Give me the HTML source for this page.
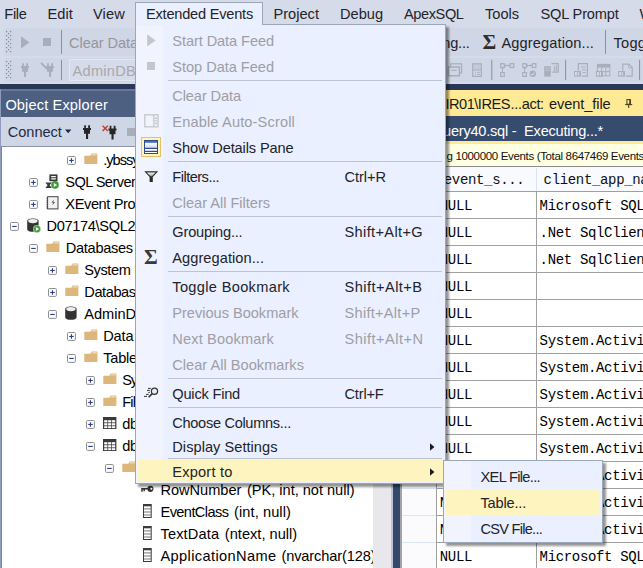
<!DOCTYPE html>
<html><head><meta charset="utf-8"><title>SSMS</title><style>html,body{margin:0;padding:0;background:#fff}
#r{position:relative;width:643px;height:568px;overflow:hidden;background:#d6dbe9;font-family:"Liberation Sans",sans-serif}
.t{position:absolute;white-space:pre;line-height:20px;display:block}
</style></head><body>
<div id="r">
<!-- base -->
<div style="position:absolute;left:0px;top:0px;width:643px;height:84px;background:#d6dbe9;"></div>
<div style="position:absolute;left:4px;top:28px;width:639px;height:28px;background:#cfd6e5;border-radius:2px 0 0 2px;"></div>
<div style="position:absolute;left:4px;top:57.5px;width:639px;height:24px;background:#cfd6e5;border-radius:2px 0 0 2px;"></div>
<svg style="position:absolute;left:6px;top:31px" width="6" height="22" fill="#7f8aa3"><rect x="0" y="0" width="1.2" height="1.2"/><rect x="4" y="0" width="1.2" height="1.2"/><rect x="2" y="2" width="1.2" height="1.2"/><rect x="0" y="4" width="1.2" height="1.2"/><rect x="4" y="4" width="1.2" height="1.2"/><rect x="2" y="6" width="1.2" height="1.2"/><rect x="0" y="8" width="1.2" height="1.2"/><rect x="4" y="8" width="1.2" height="1.2"/><rect x="2" y="10" width="1.2" height="1.2"/><rect x="0" y="12" width="1.2" height="1.2"/><rect x="4" y="12" width="1.2" height="1.2"/><rect x="2" y="14" width="1.2" height="1.2"/><rect x="0" y="16" width="1.2" height="1.2"/><rect x="4" y="16" width="1.2" height="1.2"/><rect x="2" y="18" width="1.2" height="1.2"/><rect x="0" y="20" width="1.2" height="1.2"/><rect x="4" y="20" width="1.2" height="1.2"/></svg>
<svg style="position:absolute;left:6px;top:61px" width="6" height="18" fill="#7f8aa3"><rect x="0" y="0" width="1.2" height="1.2"/><rect x="4" y="0" width="1.2" height="1.2"/><rect x="2" y="2" width="1.2" height="1.2"/><rect x="0" y="4" width="1.2" height="1.2"/><rect x="4" y="4" width="1.2" height="1.2"/><rect x="2" y="6" width="1.2" height="1.2"/><rect x="0" y="8" width="1.2" height="1.2"/><rect x="4" y="8" width="1.2" height="1.2"/><rect x="2" y="10" width="1.2" height="1.2"/><rect x="0" y="12" width="1.2" height="1.2"/><rect x="4" y="12" width="1.2" height="1.2"/><rect x="2" y="14" width="1.2" height="1.2"/><rect x="0" y="16" width="1.2" height="1.2"/><rect x="4" y="16" width="1.2" height="1.2"/></svg>
<svg style="position:absolute;left:21px;top:35.5px" width="9" height="13"><path d="M0 0.2L8.4 6.4 0 12.6z" fill="#a9aebb"/></svg>
<div style="position:absolute;left:43px;top:37.7px;width:8.2px;height:8.3px;background:#a9aebb;"></div>
<div style="position:absolute;left:61px;top:30px;width:1px;height:24px;background:#8591a8;"></div>
<svg style="position:absolute;left:21px;top:63px" width="8" height="14"><path d="M1.2 0.2h1.7v2.8H1.2z M5.2 0.2h1.8v2.8H5.2z M0 3h8v2H0z M1 5h6v3.7H1z M3 8.7h2.1v5.3H3z" fill="#a9aebb"/></svg>
<svg style="position:absolute;left:40px;top:62px" width="15" height="16" fill="#a9aebb"><g transform="translate(6,1)"><path d="M1.2 0.2h1.7v2.8H1.2z M5.2 0.2h1.8v2.8H5.2z M0 3h8v2H0z M1 5h6v3.7H1z M3 8.7h2.1v5.3H3z"/></g><path d="M0.4 1.4l1.4-1.2 6 6.2-1.6 1.2z"/></svg>
<div style="position:absolute;left:61px;top:60px;width:1px;height:20px;background:#8591a8;"></div>
<div style="position:absolute;left:69px;top:59.3px;width:72px;height:21.5px;background:#d5dbe9;border:1px solid #e1e6f0;box-sizing:border-box;"></div>
<span style="position:absolute;left:482.6px;top:30px;font:bold 21px 'Liberation Serif',serif;line-height:24px;color:#2d2d2d">&Sigma;</span>
<div style="position:absolute;left:605px;top:30px;width:1px;height:24px;background:#8591a8;"></div>
<svg style="position:absolute;left:443px;top:58px" width="200" height="26" fill="none" stroke="#a9aebb" stroke-width="1.2">
<rect x="7.6" y="5.8" width="11" height="9.2"/><rect x="5.4" y="9" width="11" height="8.8" fill="#cfd6e5" stroke-width="1.5"/><line x1="8.4" y1="12.4" x2="13.6" y2="12.4"/>
<rect x="29.7" y="5.8" width="8.6" height="12.6"/><rect x="30.2" y="6.2" width="7.6" height="5.6" fill="#a9aebb" fill-opacity=".3" stroke="none"/><line x1="30" y1="12" x2="38" y2="12" stroke-width="1"/><path d="M32 14.3h1M34 14.3h3M32 16.4h1M34 16.4h3" stroke-width="1"/>
<line x1="48.8" y1="1.8" x2="48.8" y2="22" stroke="#8591a8" stroke-width="1"/>
<rect x="57.7" y="5.7" width="3.6" height="3.8"/><rect x="67.2" y="5.7" width="3.6" height="3.8"/><rect x="57.7" y="14.6" width="3.6" height="3.8"/><line x1="61.6" y1="7.5" x2="67" y2="7.5" stroke-width="1"/><path d="M63 6.4l-1.2 1.1 1.2 1.1M65.4 6.4l1.2 1.1-1.2 1.1" stroke-width=".8"/><line x1="59.5" y1="9.8" x2="59.5" y2="14.4" stroke-width="1"/><path d="M58.5 11l1-1.1 1 1.1" stroke-width=".8"/>
<rect x="79.8" y="5.7" width="3.6" height="3.8"/><rect x="89.3" y="5.7" width="3.6" height="3.8"/><rect x="79.8" y="14.6" width="3.6" height="3.8"/><line x1="83.7" y1="7.5" x2="89" y2="7.5" stroke-width="1"/><path d="M85 6.4l-1.2 1.1 1.2 1.1M87.4 6.4l1.2 1.1-1.2 1.1" stroke-width=".8"/><line x1="81.6" y1="9.8" x2="81.6" y2="14.4" stroke-width="1"/><path d="M80.6 11l1-1.1 1 1.1" stroke-width=".8"/><circle cx="89.8" cy="15.8" r="3.2" fill="#a9aebb" stroke="none"/><path d="M88.2 15.8l1.2 1.3 2-2.5" stroke="#e6eaf3" stroke-width=".9"/>
<rect x="101.2" y="8.3" width="6.6" height="10.3" fill="#a9aebb" stroke="none"/><path d="M102 10.3h5M102 12.3h5" stroke="#c6ccda" stroke-width=".8"/><path d="M108.4 5.6h6.8v8.6h-6"/><path d="M111.4 8.4v5M113.3 7v6.4" stroke-width="1"/>
<line x1="122.6" y1="1.8" x2="122.6" y2="22" stroke="#8591a8" stroke-width="1"/>
<path d="M135.4 12.6V5.7h9v12.4h-5.6"/><path d="M138 9h4.6M138.6 11.8h4M139.6 14.6h3" stroke-width="1"/><rect x="131" y="13" width="7" height="5.6" fill="#a9aebb" stroke="none"/><path d="M132.4 14.5h1.4v2.6h-1.4z M135.6 14.2v3.2" stroke="#e6eaf3" stroke-width="0.8" fill="none"/>
<rect x="154.4" y="6.4" width="12.4" height="11.4" stroke-width="1"/><rect x="154" y="6" width="13.2" height="3.6" fill="#a9aebb" stroke="none"/><path d="M158.6 9.6v8M162.8 9.6v8M154.4 13.6h12.4" stroke-width="1"/><rect x="152.9" y="13" width="7" height="5.6" fill="#a9aebb" stroke="none"/><path d="M154.3 14.5h1.4v2.6h-1.4z M157.5 14.2v3.2" stroke="#e6eaf3" stroke-width="0.8" fill="none"/>
<path d="M179.8 12.6V6.2h6.2l3.2 3.2v8.8h-6.4"/><path d="M185.6 6.4v3.4h3.4" stroke-width=".9"/><rect x="175" y="13" width="7" height="5.6" fill="#a9aebb" stroke="none"/><path d="M176.4 14.5h1.4v2.6h-1.4z M179.6 14.2v3.2" stroke="#e6eaf3" stroke-width="0.8" fill="none"/>
<line x1="196.6" y1="1.8" x2="196.6" y2="22" stroke="#8591a8" stroke-width="1"/>
</svg>
<div style="position:absolute;left:0px;top:84px;width:643px;height:6px;background:#293955;"></div>
<div style="position:absolute;left:0px;top:89.4px;width:400px;height:479px;background:#34486b;"></div>
<div style="position:absolute;left:0px;top:89.4px;width:392px;height:479px;background:#8e9bbc;"></div>
<div style="position:absolute;left:1.4px;top:89.4px;width:390.6px;height:1.6px;background:#6577a0;"></div>
<div style="position:absolute;left:1.4px;top:91px;width:390.6px;height:26px;background:#4d6082;"></div>
<div style="position:absolute;left:1.4px;top:117px;width:390.6px;height:29px;background:#cfd6e5;"></div>
<div style="position:absolute;left:1px;top:146px;width:391px;height:1px;background:#8e95a8;"></div>
<div style="position:absolute;left:1.3px;top:146px;width:0.8px;height:422px;background:#7c869e;"></div>
<div style="position:absolute;left:2px;top:147px;width:371px;height:421px;background:#ffffff;"></div>
<div style="position:absolute;left:373px;top:147px;width:18px;height:421px;background:#e8e8ec;"></div>
<div style="position:absolute;left:391px;top:90px;width:2px;height:478px;background:#bcc5d8;"></div>
<svg style="position:absolute;left:65px;top:129px" width="7" height="5"><path d="M0 0.5h6.4L3.2 4.2z" fill="#1e2a4a"/></svg>
<svg style="position:absolute;left:83px;top:125px" width="8" height="14"><path d="M1.2 0.2h1.7v2.8H1.2z M5.2 0.2h1.8v2.8H5.2z M0 3h8v2H0z M1 5h6v3.7H1z M3 8.7h2.1v5.3H3z" fill="#262626"/></svg>
<svg style="position:absolute;left:101.5px;top:124.5px" width="16" height="15"><g transform="translate(6.5,0.5)"><path d="M1.2 0.2h1.7v2.8H1.2z M5.2 0.2h1.8v2.8H5.2z M0 3h8v2H0z M1 5h6v3.7H1z M3 8.7h2.1v5.3H3z" fill="#262626"/></g><path d="M0.6 0.8l5.2 5.2M5.8 0.8L0.6 6" stroke="#c8391f" stroke-width="1.3"/></svg>
<div style="position:absolute;left:127px;top:128px;width:9px;height:8px;background:#a9aebb;"></div>
<div style="position:absolute;left:400px;top:89.7px;width:243px;height:26.3px;background:#feea95;"></div>
<div style="position:absolute;left:400px;top:116px;width:243px;height:25px;background:#364c6e;"></div>
<div style="position:absolute;left:400px;top:141px;width:243px;height:2.5px;background:#feea95;"></div>
<div style="position:absolute;left:400px;top:143.5px;width:243px;height:23px;background:#ffffe1;"></div>
<div style="position:absolute;left:400px;top:167px;width:243px;height:401px;background:#ffffff;"></div>
<div style="position:absolute;left:400px;top:167px;width:243px;height:24px;background:#f9fafd;"></div>
<div style="position:absolute;left:400px;top:166px;width:243px;height:1px;background:#8c8c8c;"></div>
<div style="position:absolute;left:401.5px;top:167px;width:34.5px;height:401px;background:#fbfbfd;"></div>
<div style="position:absolute;left:399.5px;top:143px;width:2px;height:425px;background:#a3a3a3;"></div>
<svg style="position:absolute;left:624px;top:98px" width="10" height="11" fill="none" stroke="#4a3f1e"><rect x="2.9" y="1.6" width="3.4" height="4.6" stroke-width="1"/><path d="M6.1 1.6v4.6" stroke-width="1.6"/><path d="M1.2 6.6h7" stroke-width="1.1"/><path d="M4.7 6.8v3.2" stroke-width="1.1"/></svg>
<div style="position:absolute;left:437px;top:191px;width:206px;height:1px;background:#a0a0a0;"></div>
<div style="position:absolute;left:402px;top:191px;width:34px;height:1px;background:#d9e6f5;"></div>
<div style="position:absolute;left:437px;top:218px;width:206px;height:1px;background:#a0a0a0;"></div>
<div style="position:absolute;left:402px;top:218px;width:34px;height:1px;background:#d9e6f5;"></div>
<div style="position:absolute;left:437px;top:245px;width:206px;height:1px;background:#a0a0a0;"></div>
<div style="position:absolute;left:402px;top:245px;width:34px;height:1px;background:#d9e6f5;"></div>
<div style="position:absolute;left:437px;top:272px;width:206px;height:1px;background:#a0a0a0;"></div>
<div style="position:absolute;left:402px;top:272px;width:34px;height:1px;background:#d9e6f5;"></div>
<div style="position:absolute;left:437px;top:299px;width:206px;height:1px;background:#a0a0a0;"></div>
<div style="position:absolute;left:402px;top:299px;width:34px;height:1px;background:#d9e6f5;"></div>
<div style="position:absolute;left:437px;top:326px;width:206px;height:1px;background:#a0a0a0;"></div>
<div style="position:absolute;left:402px;top:326px;width:34px;height:1px;background:#d9e6f5;"></div>
<div style="position:absolute;left:437px;top:353px;width:206px;height:1px;background:#a0a0a0;"></div>
<div style="position:absolute;left:402px;top:353px;width:34px;height:1px;background:#d9e6f5;"></div>
<div style="position:absolute;left:437px;top:380px;width:206px;height:1px;background:#a0a0a0;"></div>
<div style="position:absolute;left:402px;top:380px;width:34px;height:1px;background:#d9e6f5;"></div>
<div style="position:absolute;left:437px;top:407px;width:206px;height:1px;background:#a0a0a0;"></div>
<div style="position:absolute;left:402px;top:407px;width:34px;height:1px;background:#d9e6f5;"></div>
<div style="position:absolute;left:437px;top:434px;width:206px;height:1px;background:#a0a0a0;"></div>
<div style="position:absolute;left:402px;top:434px;width:34px;height:1px;background:#d9e6f5;"></div>
<div style="position:absolute;left:437px;top:461px;width:206px;height:1px;background:#a0a0a0;"></div>
<div style="position:absolute;left:402px;top:461px;width:34px;height:1px;background:#d9e6f5;"></div>
<div style="position:absolute;left:437px;top:488px;width:206px;height:1px;background:#a0a0a0;"></div>
<div style="position:absolute;left:402px;top:488px;width:34px;height:1px;background:#d9e6f5;"></div>
<div style="position:absolute;left:437px;top:515px;width:206px;height:1px;background:#a0a0a0;"></div>
<div style="position:absolute;left:402px;top:515px;width:34px;height:1px;background:#d9e6f5;"></div>
<div style="position:absolute;left:437px;top:542px;width:206px;height:1px;background:#a0a0a0;"></div>
<div style="position:absolute;left:402px;top:542px;width:34px;height:1px;background:#d9e6f5;"></div>
<div style="position:absolute;left:436px;top:191px;width:1px;height:377px;background:#a0a0a0;"></div>
<div style="position:absolute;left:536px;top:191px;width:1px;height:377px;background:#a0a0a0;"></div>
<div style="position:absolute;left:536px;top:168px;width:1px;height:23px;background:#dde3ee;"></div>
<div style="position:absolute;left:436px;top:168px;width:1px;height:23px;background:#dde3ee;"></div>
<svg style="position:absolute;left:67.2px;top:156.1px" width="10" height="10"><rect x="0.5" y="0.5" width="7.9" height="7.9" rx="1" fill="#fcfcfc" stroke="#8f8f8f"/><path d="M2.2 4.45h4.5" stroke="#2b3f8f" stroke-width="1.1"/><path d="M4.45 2.2v4.5" stroke="#2b3f8f" stroke-width="1.1"/></svg>
<svg style="position:absolute;left:83.5px;top:152.7px" width="14" height="12"><path d="M0.3 2.8L6.3 2.8 7.6 0.6 13 0.6 13.4 1 13.4 10.6 13 11 0.3 11Z" fill="#dcb67a"/><path d="M7.2 2.4l0.9-1.3h4.6v1.3z" fill="#efd7a8"/></svg>
<svg style="position:absolute;left:29.2px;top:178.1px" width="10" height="10"><rect x="0.5" y="0.5" width="7.9" height="7.9" rx="1" fill="#fcfcfc" stroke="#8f8f8f"/><path d="M2.2 4.45h4.5" stroke="#2b3f8f" stroke-width="1.1"/><path d="M4.45 2.2v4.5" stroke="#2b3f8f" stroke-width="1.1"/></svg>
<svg style="position:absolute;left:44.5px;top:173.6px" width="16" height="17"><rect x="4.4" y="0.4" width="8.1" height="6.8" fill="#3a3a3a"/><path d="M6.2 2.6h4.6M6.2 4.9h4.6" stroke="#fff" stroke-width="1.3"/><path d="M0.3 8.4h6.6l-2.3 2.85 2.3 2.85H0.3l2.3-2.85z" fill="#3a3a3a"/><circle cx="10" cy="10.9" r="3.8" fill="#3f9c35"/><path d="M8.8 8.9l3.3 2-3.3 2z" fill="#fff"/></svg>
<svg style="position:absolute;left:29.2px;top:200.1px" width="10" height="10"><rect x="0.5" y="0.5" width="7.9" height="7.9" rx="1" fill="#fcfcfc" stroke="#8f8f8f"/><path d="M2.2 4.45h4.5" stroke="#2b3f8f" stroke-width="1.1"/><path d="M4.45 2.2v4.5" stroke="#2b3f8f" stroke-width="1.1"/></svg>
<svg style="position:absolute;left:45.5px;top:196px" width="14" height="15"><rect x="1.6" y="0.7" width="10.4" height="12.2" fill="#f2f2f2" stroke="#444" stroke-width="1"/><path d="M0.4 2.2h1.6M0.4 4.2h1.6M0.4 6.2h1.6M0.4 8.2h1.6M0.4 10.2h1.6M0.4 12h1.6" stroke="#444" stroke-width="0.9"/><path d="M8.2 3.4L5.4 6.5h1.9L6.2 9.4 9 6h-1.9z" fill="#444"/></svg>
<svg style="position:absolute;left:10.2px;top:222.1px" width="10" height="10"><rect x="0.5" y="0.5" width="7.9" height="7.9" rx="1" fill="#fcfcfc" stroke="#8f8f8f"/><path d="M2.2 4.45h4.5" stroke="#2b3f8f" stroke-width="1.1"/></svg>
<svg style="position:absolute;left:26.9px;top:218.3px" width="13" height="15"><path d="M0.2 3C0.2 -0.4 11.6 -0.4 11.6 3V11.2C11.6 14.6 0.2 14.6 0.2 11.2Z" fill="#333"/><ellipse cx="5.9" cy="3.1" rx="4.7" ry="2.1" fill="#eee"/></svg>
<svg style="position:absolute;left:32.6px;top:224.6px" width="9" height="9"><circle cx="4" cy="4" r="3.8" fill="#3f9c35" stroke="#fff" stroke-width="0.5"/><path d="M2.9 2.1l3.2 1.9-3.2 1.9z" fill="#fff"/></svg>
<svg style="position:absolute;left:29.2px;top:244.1px" width="10" height="10"><rect x="0.5" y="0.5" width="7.9" height="7.9" rx="1" fill="#fcfcfc" stroke="#8f8f8f"/><path d="M2.2 4.45h4.5" stroke="#2b3f8f" stroke-width="1.1"/></svg>
<svg style="position:absolute;left:45.5px;top:240.7px" width="14" height="12"><path d="M0.3 2.8L6.3 2.8 7.6 0.6 13 0.6 13.4 1 13.4 10.6 13 11 0.3 11Z" fill="#dcb67a"/><path d="M7.2 2.4l0.9-1.3h4.6v1.3z" fill="#efd7a8"/></svg>
<svg style="position:absolute;left:48.2px;top:266.1px" width="10" height="10"><rect x="0.5" y="0.5" width="7.9" height="7.9" rx="1" fill="#fcfcfc" stroke="#8f8f8f"/><path d="M2.2 4.45h4.5" stroke="#2b3f8f" stroke-width="1.1"/><path d="M4.45 2.2v4.5" stroke="#2b3f8f" stroke-width="1.1"/></svg>
<svg style="position:absolute;left:64.5px;top:262.7px" width="14" height="12"><path d="M0.3 2.8L6.3 2.8 7.6 0.6 13 0.6 13.4 1 13.4 10.6 13 11 0.3 11Z" fill="#dcb67a"/><path d="M7.2 2.4l0.9-1.3h4.6v1.3z" fill="#efd7a8"/></svg>
<svg style="position:absolute;left:48.2px;top:288.1px" width="10" height="10"><rect x="0.5" y="0.5" width="7.9" height="7.9" rx="1" fill="#fcfcfc" stroke="#8f8f8f"/><path d="M2.2 4.45h4.5" stroke="#2b3f8f" stroke-width="1.1"/><path d="M4.45 2.2v4.5" stroke="#2b3f8f" stroke-width="1.1"/></svg>
<svg style="position:absolute;left:64.5px;top:284.7px" width="14" height="12"><path d="M0.3 2.8L6.3 2.8 7.6 0.6 13 0.6 13.4 1 13.4 10.6 13 11 0.3 11Z" fill="#dcb67a"/><path d="M7.2 2.4l0.9-1.3h4.6v1.3z" fill="#efd7a8"/></svg>
<svg style="position:absolute;left:48.2px;top:310.1px" width="10" height="10"><rect x="0.5" y="0.5" width="7.9" height="7.9" rx="1" fill="#fcfcfc" stroke="#8f8f8f"/><path d="M2.2 4.45h4.5" stroke="#2b3f8f" stroke-width="1.1"/></svg>
<svg style="position:absolute;left:65px;top:306px" width="13" height="15"><path d="M0.2 3C0.2 -0.4 11.6 -0.4 11.6 3V11.2C11.6 14.6 0.2 14.6 0.2 11.2Z" fill="#333"/><ellipse cx="5.9" cy="3.1" rx="4.7" ry="2.1" fill="#eee"/></svg>
<svg style="position:absolute;left:67.2px;top:332.1px" width="10" height="10"><rect x="0.5" y="0.5" width="7.9" height="7.9" rx="1" fill="#fcfcfc" stroke="#8f8f8f"/><path d="M2.2 4.45h4.5" stroke="#2b3f8f" stroke-width="1.1"/><path d="M4.45 2.2v4.5" stroke="#2b3f8f" stroke-width="1.1"/></svg>
<svg style="position:absolute;left:83.5px;top:328.7px" width="14" height="12"><path d="M0.3 2.8L6.3 2.8 7.6 0.6 13 0.6 13.4 1 13.4 10.6 13 11 0.3 11Z" fill="#dcb67a"/><path d="M7.2 2.4l0.9-1.3h4.6v1.3z" fill="#efd7a8"/></svg>
<svg style="position:absolute;left:67.2px;top:354.1px" width="10" height="10"><rect x="0.5" y="0.5" width="7.9" height="7.9" rx="1" fill="#fcfcfc" stroke="#8f8f8f"/><path d="M2.2 4.45h4.5" stroke="#2b3f8f" stroke-width="1.1"/></svg>
<svg style="position:absolute;left:83.5px;top:350.7px" width="14" height="12"><path d="M0.3 2.8L6.3 2.8 7.6 0.6 13 0.6 13.4 1 13.4 10.6 13 11 0.3 11Z" fill="#dcb67a"/><path d="M7.2 2.4l0.9-1.3h4.6v1.3z" fill="#efd7a8"/></svg>
<svg style="position:absolute;left:86.2px;top:376.1px" width="10" height="10"><rect x="0.5" y="0.5" width="7.9" height="7.9" rx="1" fill="#fcfcfc" stroke="#8f8f8f"/><path d="M2.2 4.45h4.5" stroke="#2b3f8f" stroke-width="1.1"/><path d="M4.45 2.2v4.5" stroke="#2b3f8f" stroke-width="1.1"/></svg>
<svg style="position:absolute;left:102.5px;top:372.7px" width="14" height="12"><path d="M0.3 2.8L6.3 2.8 7.6 0.6 13 0.6 13.4 1 13.4 10.6 13 11 0.3 11Z" fill="#dcb67a"/><path d="M7.2 2.4l0.9-1.3h4.6v1.3z" fill="#efd7a8"/></svg>
<svg style="position:absolute;left:86.2px;top:398.1px" width="10" height="10"><rect x="0.5" y="0.5" width="7.9" height="7.9" rx="1" fill="#fcfcfc" stroke="#8f8f8f"/><path d="M2.2 4.45h4.5" stroke="#2b3f8f" stroke-width="1.1"/><path d="M4.45 2.2v4.5" stroke="#2b3f8f" stroke-width="1.1"/></svg>
<svg style="position:absolute;left:102.5px;top:394.7px" width="14" height="12"><path d="M0.3 2.8L6.3 2.8 7.6 0.6 13 0.6 13.4 1 13.4 10.6 13 11 0.3 11Z" fill="#dcb67a"/><path d="M7.2 2.4l0.9-1.3h4.6v1.3z" fill="#efd7a8"/></svg>
<svg style="position:absolute;left:86.2px;top:420.1px" width="10" height="10"><rect x="0.5" y="0.5" width="7.9" height="7.9" rx="1" fill="#fcfcfc" stroke="#8f8f8f"/><path d="M2.2 4.45h4.5" stroke="#2b3f8f" stroke-width="1.1"/><path d="M4.45 2.2v4.5" stroke="#2b3f8f" stroke-width="1.1"/></svg>
<svg style="position:absolute;left:102.9px;top:417.1px" width="14" height="13"><rect x="0" y="0" width="13.4" height="12" fill="#3a3a3a"/><g fill="#fff"><rect x="1.2" y="3.2" width="3.2" height="2.2"/><rect x="1.2" y="6.2" width="3.2" height="2.2"/><rect x="1.2" y="9.2" width="3.2" height="1.9"/><rect x="5.1" y="3.2" width="3.2" height="2.2"/><rect x="5.1" y="6.2" width="3.2" height="2.2"/><rect x="5.1" y="9.2" width="3.2" height="1.9"/><rect x="9" y="3.2" width="3.2" height="2.2"/><rect x="9" y="6.2" width="3.2" height="2.2"/><rect x="9" y="9.2" width="3.2" height="1.9"/></g></svg>
<svg style="position:absolute;left:86.2px;top:442.1px" width="10" height="10"><rect x="0.5" y="0.5" width="7.9" height="7.9" rx="1" fill="#fcfcfc" stroke="#8f8f8f"/><path d="M2.2 4.45h4.5" stroke="#2b3f8f" stroke-width="1.1"/></svg>
<svg style="position:absolute;left:102.9px;top:439.1px" width="14" height="13"><rect x="0" y="0" width="13.4" height="12" fill="#3a3a3a"/><g fill="#fff"><rect x="1.2" y="3.2" width="3.2" height="2.2"/><rect x="1.2" y="6.2" width="3.2" height="2.2"/><rect x="1.2" y="9.2" width="3.2" height="1.9"/><rect x="5.1" y="3.2" width="3.2" height="2.2"/><rect x="5.1" y="6.2" width="3.2" height="2.2"/><rect x="5.1" y="9.2" width="3.2" height="1.9"/><rect x="9" y="3.2" width="3.2" height="2.2"/><rect x="9" y="6.2" width="3.2" height="2.2"/><rect x="9" y="9.2" width="3.2" height="1.9"/></g></svg>
<svg style="position:absolute;left:105.2px;top:464.1px" width="10" height="10"><rect x="0.5" y="0.5" width="7.9" height="7.9" rx="1" fill="#fcfcfc" stroke="#8f8f8f"/><path d="M2.2 4.45h4.5" stroke="#2b3f8f" stroke-width="1.1"/></svg>
<svg style="position:absolute;left:121.5px;top:460.7px" width="14" height="12"><path d="M0.3 2.8L6.3 2.8 7.6 0.6 13 0.6 13.4 1 13.4 10.6 13 11 0.3 11Z" fill="#dcb67a"/><path d="M7.2 2.4l0.9-1.3h4.6v1.3z" fill="#efd7a8"/></svg>
<svg style="position:absolute;left:141px;top:485px" width="13" height="9"><circle cx="9.4" cy="3.8" r="3.1" fill="#333"/><circle cx="10.4" cy="3.8" r="1" fill="#fff"/><path d="M0.2 3.8h7M1 3.8v3M3.2 3.8v2.4" stroke="#333" stroke-width="1.5" fill="none"/></svg>
<svg style="position:absolute;left:142.6px;top:504px" width="10" height="15"><rect x="0.5" y="0.5" width="7.7" height="13" fill="#fff" stroke="#3c3c3c" stroke-width="1"/><rect x="0.5" y="0.5" width="7.7" height="1.8" fill="#3c3c3c"/><path d="M1 4.9h7M1 8h7M1 11h7" stroke="#555" stroke-width="0.8"/></svg>
<svg style="position:absolute;left:142.6px;top:526px" width="10" height="15"><rect x="0.5" y="0.5" width="7.7" height="13" fill="#fff" stroke="#3c3c3c" stroke-width="1"/><rect x="0.5" y="0.5" width="7.7" height="1.8" fill="#3c3c3c"/><path d="M1 4.9h7M1 8h7M1 11h7" stroke="#555" stroke-width="0.8"/></svg>
<svg style="position:absolute;left:142.6px;top:548px" width="10" height="15"><rect x="0.5" y="0.5" width="7.7" height="13" fill="#fff" stroke="#3c3c3c" stroke-width="1"/><rect x="0.5" y="0.5" width="7.7" height="1.8" fill="#3c3c3c"/><path d="M1 4.9h7M1 8h7M1 11h7" stroke="#555" stroke-width="0.8"/></svg>
<span class="t" style='left:4.30px;top:3.54px;font-size:14.6px;color:#232329;letter-spacing:-0.304px;'>File</span>
<span class="t" style='left:47.60px;top:3.54px;font-size:14.6px;color:#232329;letter-spacing:-0.014px;'>Edit</span>
<span class="t" style='left:93.00px;top:3.54px;font-size:14.6px;color:#232329;letter-spacing:0.131px;'>View</span>
<span class="t" style='left:273.50px;top:3.54px;font-size:14.6px;color:#232329;letter-spacing:0.011px;'>Project</span>
<span class="t" style='left:340.00px;top:3.54px;font-size:14.6px;color:#232329;letter-spacing:-0.003px;'>Debug</span>
<span class="t" style='left:404.00px;top:3.54px;font-size:14.6px;color:#232329;letter-spacing:-0.424px;'>ApexSQL</span>
<span class="t" style='left:485.00px;top:3.54px;font-size:14.6px;color:#232329;letter-spacing:-0.016px;'>Tools</span>
<span class="t" style='left:540.50px;top:3.54px;font-size:14.6px;color:#232329;letter-spacing:-0.157px;'>SQL Prompt</span>
<span class="t" style='left:639.50px;top:3.54px;font-size:14.6px;color:#232329;letter-spacing:-0.234px;'>Window</span>
<span class="t" style='left:69.00px;top:32.64px;font-size:14.6px;color:#96959b;letter-spacing:-0.077px;'>Clear Data</span>
<span class="t" style='left:400.00px;top:32.74px;font-size:14.6px;color:#232329;letter-spacing:-0.246px;'>Grouping...</span>
<span class="t" style='left:501.50px;top:32.74px;font-size:14.6px;color:#232329;letter-spacing:0.116px;'>Aggregation...</span>
<span class="t" style='left:613.50px;top:32.74px;font-size:14.6px;color:#232329;letter-spacing:0.249px;'>Toggle Bookmark</span>
<span class="t" style='left:72.50px;top:61.24px;font-size:14.6px;color:#a9a8ad;letter-spacing:0.266px;'>AdminDB</span>
<span class="t" style='left:5.40px;top:94.84px;font-size:14.6px;color:#ffffff;letter-spacing:0.128px;'>Object Explorer</span>
<span class="t" style='left:7.80px;top:122.04px;font-size:14.6px;color:#1e2a4a;letter-spacing:-0.051px;'>Connect</span>
<span class="t" style='left:103.30px;top:150.24px;font-size:14.6px;color:#000;letter-spacing:-1.033px;width:31.299999999999997px;overflow:hidden;'>.ybssy</span>
<span class="t" style='left:65.30px;top:172.24px;font-size:14.6px;color:#000;letter-spacing:-0.580px;width:69.3px;overflow:hidden;'>SQL Server Agent</span>
<span class="t" style='left:65.30px;top:194.24px;font-size:14.6px;color:#000;letter-spacing:-0.393px;width:69.3px;overflow:hidden;'>XEvent Profiler</span>
<span class="t" style='left:46.50px;top:216.24px;font-size:14.6px;color:#000;letter-spacing:-0.345px;width:88.1px;overflow:hidden;'>D07174\SQL2016 (SQL</span>
<span class="t" style='left:65.80px;top:238.24px;font-size:14.6px;color:#000;letter-spacing:-0.309px;width:68.8px;overflow:hidden;'>Databases</span>
<span class="t" style='left:84.30px;top:260.24px;font-size:14.6px;color:#000;letter-spacing:-0.426px;width:50.3px;overflow:hidden;'>System Databases</span>
<span class="t" style='left:84.30px;top:282.24px;font-size:14.6px;color:#000;letter-spacing:-0.437px;width:50.3px;overflow:hidden;'>Database Snapshots</span>
<span class="t" style='left:84.30px;top:304.24px;font-size:14.6px;color:#000;letter-spacing:-0.034px;width:50.3px;overflow:hidden;'>AdminDB</span>
<span class="t" style='left:103.20px;top:326.24px;font-size:14.6px;color:#000;letter-spacing:-0.157px;width:31.39999999999999px;overflow:hidden;'>Data</span>
<span class="t" style='left:103.20px;top:348.24px;font-size:14.6px;color:#000;letter-spacing:-0.218px;width:31.39999999999999px;overflow:hidden;'>Tables</span>
<span class="t" style='left:122.30px;top:370.24px;font-size:14.6px;color:#000;letter-spacing:-1.166px;width:12.299999999999997px;overflow:hidden;'>System Tables</span>
<span class="t" style='left:122.30px;top:392.24px;font-size:14.6px;color:#000;letter-spacing:-0.902px;width:12.299999999999997px;overflow:hidden;'>FileTables</span>
<span class="t" style='left:122.30px;top:414.24px;font-size:14.6px;color:#000;letter-spacing:-0.517px;width:12.299999999999997px;overflow:hidden;'>dbo.Trace</span>
<span class="t" style='left:122.30px;top:436.24px;font-size:14.6px;color:#000;letter-spacing:-0.517px;width:12.299999999999997px;overflow:hidden;'>dbo.TraceTable</span>
<span class="t" style='left:160.50px;top:480.24px;font-size:14.6px;color:#000;letter-spacing:-0.034px;'>RowNumber</span>
<span class="t" style='left:247.00px;top:480.24px;font-size:14.6px;color:#000;letter-spacing:-0.021px;'>(PK, int, not null)</span>
<span class="t" style='left:160.50px;top:502.24px;font-size:14.6px;color:#000;letter-spacing:-0.591px;'>EventClass</span>
<span class="t" style='left:234.00px;top:502.24px;font-size:14.6px;color:#000;letter-spacing:0.094px;'>(int, null)</span>
<span class="t" style='left:160.50px;top:524.24px;font-size:14.6px;color:#000;letter-spacing:0.138px;'>TextData</span>
<span class="t" style='left:224.80px;top:524.24px;font-size:14.6px;color:#000;letter-spacing:0.016px;'>(ntext, null)</span>
<span class="t" style='left:160.50px;top:546.24px;font-size:14.6px;color:#000;letter-spacing:0.378px;'>ApplicationName</span>
<span class="t" style='left:281.40px;top:546.24px;font-size:14.6px;color:#000;letter-spacing:-0.108px;width:91.6px;overflow:hidden;'>(nvarchar(128), null)</span>
<span class="t" style='left:445.50px;top:93.84px;font-size:14.6px;color:#1b1b1c;letter-spacing:-0.506px;'>IR01\IRES</span>
<span class="t" style='left:510.60px;top:93.84px;font-size:14.6px;color:#1b1b1c;letter-spacing:-0.355px;'>...act:</span>
<span class="t" style='left:549.00px;top:93.84px;font-size:14.6px;color:#1b1b1c;letter-spacing:-0.088px;'>event_file</span>
<span class="t" style='left:443.00px;top:121.44px;font-size:14.6px;color:#ffffff;letter-spacing:-0.233px;'>uery40.sql -  Executing...*</span>
<span class="t" style='left:446.50px;top:145.52px;font-size:11.5px;color:#111;letter-spacing:-0.338px;'>g 1000000 Events (Total 8647469 Events</span>
<span class="t" style='left:443.80px;top:170.47px;font-size:14px;color:#111;letter-spacing:-0.340px;font-family:"Liberation Mono", monospace;'>event_s...</span>
<span class="t" style='left:543.60px;top:170.47px;font-size:14px;color:#111;letter-spacing:-0.340px;font-family:"Liberation Mono", monospace;'>client_app_name</span>
<span class="t" style='left:439.80px;top:196.27px;font-size:14px;color:#000;letter-spacing:-0.340px;font-family:"Liberation Mono", monospace;'>NULL</span>
<span class="t" style='left:539.60px;top:196.27px;font-size:14px;color:#000;letter-spacing:-0.340px;font-family:"Liberation Mono", monospace;'>Microsoft SQL Server</span>
<span class="t" style='left:439.80px;top:223.27px;font-size:14px;color:#000;letter-spacing:-0.340px;font-family:"Liberation Mono", monospace;'>NULL</span>
<span class="t" style='left:539.60px;top:223.27px;font-size:14px;color:#000;letter-spacing:-0.340px;font-family:"Liberation Mono", monospace;'>.Net SqlClient Data</span>
<span class="t" style='left:439.80px;top:250.27px;font-size:14px;color:#000;letter-spacing:-0.340px;font-family:"Liberation Mono", monospace;'>NULL</span>
<span class="t" style='left:539.60px;top:250.27px;font-size:14px;color:#000;letter-spacing:-0.340px;font-family:"Liberation Mono", monospace;'>.Net SqlClient Data</span>
<span class="t" style='left:439.80px;top:277.27px;font-size:14px;color:#000;letter-spacing:-0.340px;font-family:"Liberation Mono", monospace;'>NULL</span>
<span class="t" style='left:439.80px;top:304.27px;font-size:14px;color:#000;letter-spacing:-0.340px;font-family:"Liberation Mono", monospace;'>NULL</span>
<span class="t" style='left:439.80px;top:331.27px;font-size:14px;color:#000;letter-spacing:-0.340px;font-family:"Liberation Mono", monospace;'>NULL</span>
<span class="t" style='left:539.60px;top:331.27px;font-size:14px;color:#000;letter-spacing:-0.340px;font-family:"Liberation Mono", monospace;'>System.Activities</span>
<span class="t" style='left:439.80px;top:358.27px;font-size:14px;color:#000;letter-spacing:-0.340px;font-family:"Liberation Mono", monospace;'>NULL</span>
<span class="t" style='left:539.60px;top:358.27px;font-size:14px;color:#000;letter-spacing:-0.340px;font-family:"Liberation Mono", monospace;'>System.Activities</span>
<span class="t" style='left:439.80px;top:385.27px;font-size:14px;color:#000;letter-spacing:-0.340px;font-family:"Liberation Mono", monospace;'>NULL</span>
<span class="t" style='left:539.60px;top:385.27px;font-size:14px;color:#000;letter-spacing:-0.340px;font-family:"Liberation Mono", monospace;'>System.Activities</span>
<span class="t" style='left:439.80px;top:412.27px;font-size:14px;color:#000;letter-spacing:-0.340px;font-family:"Liberation Mono", monospace;'>NULL</span>
<span class="t" style='left:539.60px;top:412.27px;font-size:14px;color:#000;letter-spacing:-0.340px;font-family:"Liberation Mono", monospace;'>System.Activities</span>
<span class="t" style='left:439.80px;top:439.27px;font-size:14px;color:#000;letter-spacing:-0.340px;font-family:"Liberation Mono", monospace;'>NULL</span>
<span class="t" style='left:539.60px;top:439.27px;font-size:14px;color:#000;letter-spacing:-0.340px;font-family:"Liberation Mono", monospace;'>System.Activities</span>
<span class="t" style='left:439.80px;top:466.27px;font-size:14px;color:#000;letter-spacing:-0.340px;font-family:"Liberation Mono", monospace;'>NULL</span>
<span class="t" style='left:539.60px;top:466.27px;font-size:14px;color:#000;letter-spacing:-0.340px;font-family:"Liberation Mono", monospace;'>System.Activities</span>
<span class="t" style='left:439.80px;top:493.27px;font-size:14px;color:#000;letter-spacing:-0.340px;font-family:"Liberation Mono", monospace;'>NULL</span>
<span class="t" style='left:539.60px;top:493.27px;font-size:14px;color:#000;letter-spacing:-0.340px;font-family:"Liberation Mono", monospace;'>System.Activities</span>
<span class="t" style='left:439.80px;top:520.27px;font-size:14px;color:#000;letter-spacing:-0.340px;font-family:"Liberation Mono", monospace;'>NULL</span>
<span class="t" style='left:539.60px;top:520.27px;font-size:14px;color:#000;letter-spacing:-0.340px;font-family:"Liberation Mono", monospace;'>System.Activities</span>
<span class="t" style='left:439.80px;top:547.27px;font-size:14px;color:#000;letter-spacing:-0.340px;font-family:"Liberation Mono", monospace;'>NULL</span>
<span class="t" style='left:539.60px;top:547.27px;font-size:14px;color:#000;letter-spacing:-0.340px;font-family:"Liberation Mono", monospace;'>Microsoft SQL Server</span>
<!-- menu -->
<div style="position:absolute;left:138px;top:27px;width:311px;height:460px;background:rgba(0,0,0,0.42);filter:blur(1.3px);"></div>
<div style="position:absolute;left:135px;top:2px;width:128px;height:24px;background:#eaf0ff;border:1px solid #9ba7b7;border-bottom:none;box-sizing:border-box;"></div>
<div style="position:absolute;left:135px;top:24px;width:311px;height:460px;background:#eaf0ff;border:1px solid #9ba7b7;box-sizing:border-box;"></div>
<div style="position:absolute;left:136px;top:22px;width:126px;height:5px;background:#eaf0ff;"></div>
<div style="position:absolute;left:136px;top:26px;width:27px;height:457px;background:#f1f4fe;"></div>
<div style="position:absolute;left:168px;top:80px;width:274px;height:1px;background:#bec4d0;"></div>
<div style="position:absolute;left:168px;top:161px;width:274px;height:1px;background:#bec4d0;"></div>
<div style="position:absolute;left:168px;top:216px;width:274px;height:1px;background:#bec4d0;"></div>
<div style="position:absolute;left:168px;top:271px;width:274px;height:1px;background:#bec4d0;"></div>
<div style="position:absolute;left:168px;top:378px;width:274px;height:1px;background:#bec4d0;"></div>
<div style="position:absolute;left:168px;top:407px;width:274px;height:1px;background:#bec4d0;"></div>
<div style="position:absolute;left:168px;top:458px;width:274px;height:1px;background:#bec4d0;"></div>
<div style="position:absolute;left:138px;top:460px;width:306px;height:22px;background:#fdf4bf;"></div>
<svg style="position:absolute;left:429.5px;top:442.5px" width="5" height="8"><path d="M0 0.3L4.4 4 0 7.7z" fill="#1b1b1c"/></svg>
<svg style="position:absolute;left:429.5px;top:467.5px" width="5" height="8"><path d="M0 0.3L4.4 4 0 7.7z" fill="#1b1b1c"/></svg>
<svg style="position:absolute;left:147px;top:33.5px" width="9" height="13"><path d="M0.2 0.2L8.6 6.4 0.2 12.6z" fill="#c3c6cc"/></svg>
<div style="position:absolute;left:147px;top:62px;width:8px;height:8px;background:#c3c6cc;"></div>
<svg style="position:absolute;left:143.6px;top:113.6px" width="15" height="14" fill="none" stroke="#c8cad0" stroke-width="1.4"><rect x="0.8" y="0.8" width="13.2" height="12"/><line x1="9.8" y1="1" x2="9.8" y2="13"/><line x1="10" y1="6.8" x2="14" y2="6.8" stroke-width="1"/><path d="M10.7 5l1.3-2 1.3 2zM10.7 8.8l1.3 2 1.3-2z" fill="#b9bcc4" stroke="none"/></svg>
<div style="position:absolute;left:141px;top:137px;width:20px;height:20px;background:#fdf4bf;border:1px solid #e5c365;box-sizing:border-box;"></div>
<svg style="position:absolute;left:144px;top:140px" width="14" height="14"><defs><linearGradient id="dp" x1="0" y1="0" x2="0" y2="1"><stop offset="0" stop-color="#ffffff"/><stop offset="1" stop-color="#c9d8f5"/></linearGradient></defs><rect x="0.5" y="0.5" width="13" height="13" fill="#fff" stroke="#2f4b8a"/><rect x="1" y="1" width="12" height="1.9" fill="#3f6fd0"/><rect x="1" y="2.9" width="12" height="4.9" fill="url(#dp)"/><path d="M1 8.4h12M1 11.4h12" stroke="#2f4b8a" stroke-width="1.2"/></svg>
<svg style="position:absolute;left:143.8px;top:171px" width="15" height="12"><defs><linearGradient id="fg" x1="0" y1="0" x2="0" y2="1"><stop offset="0" stop-color="#fff"/><stop offset="1" stop-color="#9a9a9a"/></linearGradient></defs><path d="M0.3 0.3H14.2L8.8 6V11H5.6V6Z" fill="#2a2a2a"/><path d="M2.8 1.4H11.6L8 5.2H6.4Z" fill="url(#fg)"/></svg>
<span style="position:absolute;left:143.9px;top:244.9px;font:bold 21px 'Liberation Serif',serif;line-height:24px;color:#3a3a3a">&Sigma;</span>
<svg style="position:absolute;left:143px;top:386px" width="17" height="13" fill="none" stroke="#333" stroke-width="1.2"><circle cx="11.5" cy="5.3" r="3.1" fill="#eceaf6"/><path d="M9.3 7.6L5.6 11.3" stroke-width="1.6"/><path d="M5 2.4h2.8M4 4.4h2.8M5.3 6.4h1.5M3 8.4h2.7M1 10.4h3" stroke-width="1"/></svg>
<span class="t" style='left:146.00px;top:3.54px;font-size:14.6px;color:#232329;letter-spacing:-0.223px;'>Extended Events</span>
<span class="t" style='left:172.30px;top:30.94px;font-size:14.6px;color:#9e9ea3;letter-spacing:-0.089px;'>Start Data Feed</span>
<span class="t" style='left:172.30px;top:56.94px;font-size:14.6px;color:#9e9ea3;letter-spacing:-0.038px;'>Stop Data Feed</span>
<span class="t" style='left:172.30px;top:85.94px;font-size:14.6px;color:#9e9ea3;letter-spacing:-0.107px;'>Clear Data</span>
<span class="t" style='left:172.30px;top:111.94px;font-size:14.6px;color:#9e9ea3;letter-spacing:0.146px;'>Enable Auto-Scroll</span>
<span class="t" style='left:172.30px;top:137.94px;font-size:14.6px;color:#232329;letter-spacing:-0.124px;'>Show Details Pane</span>
<span class="t" style='left:172.30px;top:166.94px;font-size:14.6px;color:#232329;letter-spacing:-0.519px;'>Filters...</span>
<span class="t" style='left:344.50px;top:166.94px;font-size:14.6px;color:#232329;letter-spacing:-0.044px;'>Ctrl+R</span>
<span class="t" style='left:172.30px;top:192.94px;font-size:14.6px;color:#9e9ea3;letter-spacing:-0.025px;'>Clear All Filters</span>
<span class="t" style='left:172.30px;top:221.94px;font-size:14.6px;color:#232329;letter-spacing:-0.182px;'>Grouping...</span>
<span class="t" style='left:344.50px;top:221.94px;font-size:14.6px;color:#232329;letter-spacing:0.351px;'>Shift+Alt+G</span>
<span class="t" style='left:172.30px;top:247.94px;font-size:14.6px;color:#232329;letter-spacing:0.059px;'>Aggregation...</span>
<span class="t" style='left:172.30px;top:276.94px;font-size:14.6px;color:#232329;letter-spacing:0.329px;'>Toggle Bookmark</span>
<span class="t" style='left:344.50px;top:276.94px;font-size:14.6px;color:#232329;letter-spacing:0.453px;'>Shift+Alt+B</span>
<span class="t" style='left:172.30px;top:302.94px;font-size:14.6px;color:#9e9ea3;letter-spacing:-0.019px;'>Previous Bookmark</span>
<span class="t" style='left:344.50px;top:302.94px;font-size:14.6px;color:#9e9ea3;letter-spacing:0.271px;'>Shift+Alt+P</span>
<span class="t" style='left:172.30px;top:328.94px;font-size:14.6px;color:#9e9ea3;letter-spacing:0.149px;'>Next Bookmark</span>
<span class="t" style='left:344.50px;top:328.94px;font-size:14.6px;color:#9e9ea3;letter-spacing:0.470px;'>Shift+Alt+N</span>
<span class="t" style='left:172.30px;top:354.94px;font-size:14.6px;color:#9e9ea3;letter-spacing:0.016px;'>Clear All Bookmarks</span>
<span class="t" style='left:172.30px;top:383.94px;font-size:14.6px;color:#232329;letter-spacing:-0.205px;'>Quick Find</span>
<span class="t" style='left:344.50px;top:383.94px;font-size:14.6px;color:#232329;letter-spacing:-0.190px;'>Ctrl+F</span>
<span class="t" style='left:172.30px;top:412.94px;font-size:14.6px;color:#232329;letter-spacing:-0.318px;'>Choose Columns...</span>
<span class="t" style='left:172.30px;top:436.94px;font-size:14.6px;color:#232329;letter-spacing:0.035px;'>Display Settings</span>
<span class="t" style='left:172.30px;top:461.94px;font-size:14.6px;color:#232329;letter-spacing:0.199px;'>Export to</span>
<!-- submenu -->
<div style="position:absolute;left:446px;top:463px;width:160px;height:83px;background:rgba(0,0,0,0.42);filter:blur(1.3px);"></div>
<div style="position:absolute;left:443px;top:460px;width:160px;height:83px;background:#eaf0ff;border:1px solid #9ba7b7;box-sizing:border-box;"></div>
<div style="position:absolute;left:444px;top:461px;width:27px;height:81px;background:#f1f4fe;"></div>
<div style="position:absolute;left:446px;top:489px;width:154px;height:25.5px;background:#fdf4bf;"></div>
<span class="t" style='left:480.50px;top:466.94px;font-size:14.6px;color:#232329;letter-spacing:-0.662px;'>XEL File...</span>
<span class="t" style='left:480.50px;top:492.94px;font-size:14.6px;color:#232329;letter-spacing:-0.195px;'>Table...</span>
<span class="t" style='left:480.50px;top:518.94px;font-size:14.6px;color:#232329;letter-spacing:-0.750px;'>CSV File...</span>
</div>
</body></html>
